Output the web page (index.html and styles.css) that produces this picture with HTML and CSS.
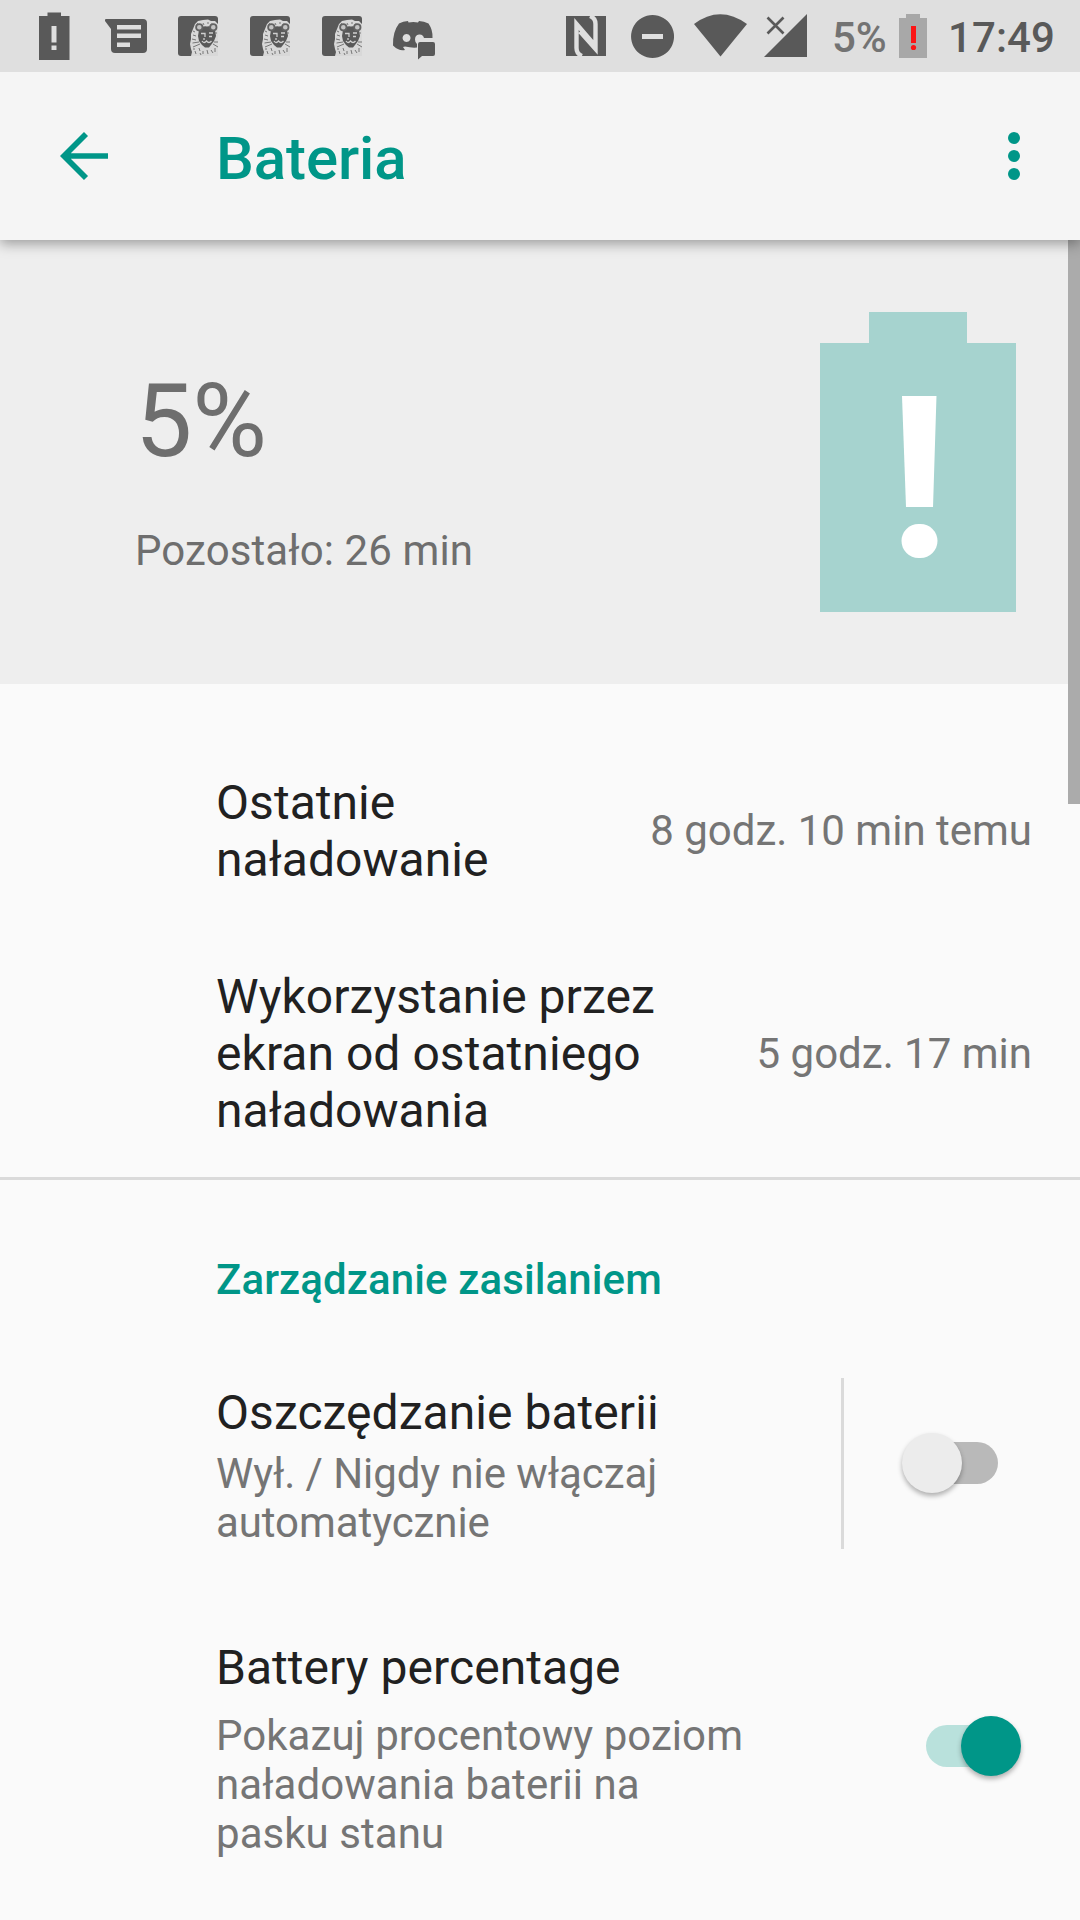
FILE: index.html
```html
<!DOCTYPE html>
<html lang="pl">
<head>
<meta charset="utf-8">
<title>Bateria</title>
<link rel="stylesheet" href="styles.css">
</head>
<body>
<svg class="defs" width="0" height="0">
  <symbol id="lion" viewBox="0 0 40 40">
    <path fill="#595959" d="M3 0H37Q40 0 40 3V40H3Q0 40 0 37V3Q0 0 3 0Z"/>
    <path fill="#d8d8d8" d="M40 8 37 5 33 5 30 3.500 25 4 20 5 17 8 15 13 13 18 13 23 12 28 13 33 14 36 13 40H40Z"/>
    <path fill="#595959" d="M21 14Q24 9.500 29 10.500 34 9.500 37 14L38 20 36 25 33 29 31 31.500H27L24 29 21 25 20 20Z"/>
    <g fill="#c4c4c4" stroke="#636363" stroke-width="1.800">
      <circle cx="21.300" cy="11.300" r="3.200"/><circle cx="35.300" cy="11.300" r="3.200"/>
    </g>
    <path fill="none" stroke="#d0d0d0" stroke-width="1.300" d="M23 17.500h4v3.500M31 17h4M31 20.500h3M24 25q2 3 4.500 0 2.500 3 5 0M26 22v2"/>
    <path fill="none" stroke="#777" stroke-width="1" d="M14.500 27l6.500-1M15 31l7-3M36 26h4M35 28l5 3M15 15l2 1M15 19l3 1M14 23l4 1M17 35l1 3M21 32l1 3M25 35v3M29 34l1 4M33 34l2 3M37 32v4M25 7l1 2M30 6v2M38 16v2M19 7l1 1M34 7v1M22 37l1 2M16 32v2"/>
  </symbol>
</svg>

<header class="status">
  <svg class="status-icons" width="480" height="72" viewBox="0 0 480 72" fill="#595959">
    <path fill-rule="evenodd" d="M47.500 12.500h13.500V16h8.500v44H39V16h8.500ZM51.500 26v16.500h5V26ZM51.500 45.500V50h5v-4.500Z"/>
    <path fill-rule="evenodd" d="M106 19h37q4 0 4 4v26q0 4-4 4h-28q-4 0-4-4V29L105 21Q104.500 19 106 19ZM117 25v4.500h24V25ZM117 33.500V38h24v-4.500ZM117 42.500V47h13v-4.500Z"/>
    <use href="#lion" x="178" y="16" width="40" height="40"/>
    <use href="#lion" x="250" y="16" width="40" height="40"/>
    <use href="#lion" x="322" y="16" width="40" height="40"/>
    <path fill-rule="evenodd" d="M399 23.500q4-2.500 9-2.500l.5 1.500q5-.8 9.500 0L419 21q5 0 9.500 2.500Q433 30 432.500 38H424q-1-4-5-3.500-4 .5-4 5 0 3 2 4.500v3.500q-5.500.5-12-1l-2 .5L405 50q-6 1.500-12-4.500Q392.500 32 399 23.500ZM406.500 34a4 4 0 1 0 .1 0Z"/>
    <path d="M420 42h13q2 0 2 2v10q0 2-2 2h-11l-4 3.500V44q0-2 2-2Z"/>
  </svg>
  <div class="status-right">
    <svg width="250" height="72" viewBox="560 0 250 72" fill="#595959">
      <rect x="566" y="16" width="40" height="40"/>
      <path fill="none" stroke="#dfdfdf" stroke-width="4.400" d="M582 56Q576.500 54 576.500 48V24L595 45.500M590 16Q595.500 18 595.500 24V49L580 31.500"/>
      <path fill-rule="evenodd" d="M652.500 15a21.500 21.500 0 1 0 .1 0ZM642 34h21v5h-21Z"/>
      <path d="M694 24Q720 4.500 747 24L720.500 56.500Z"/>
      <path d="M764 57 807 14V57Z"/>
      <path fill="none" stroke="#595959" stroke-width="2.600" d="m767.500 17.500 16 16m0-16-16 16"/>
    </svg>
    <span class="status-percent">5%</span>
    <svg class="status-battery" width="28" height="44" viewBox="0 0 28 44">
      <path fill="#a8a8a8" d="M7 0h14v4h7v40H0V4h7Z"/>
      <path fill="#fb1414" d="M12 12h5v17h-5Z"/><circle cx="14.500" cy="33.500" r="2.600" fill="#fb1414"/>
    </svg>
    <span class="status-time">17:49</span>
  </div>
</header>

<nav class="toolbar">
  <svg width="48" height="48" viewBox="0 0 48 48"><path fill="none" stroke="#009688" stroke-width="5.700" d="M48 24H4M26 2 4 24l22 22"/></svg>
  <h1 class="title">Bateria</h1>
  <svg class="more" width="12" height="48" viewBox="0 0 12 48" fill="#009688"><circle cx="6" cy="6" r="6"/><circle cx="6" cy="24" r="6"/><circle cx="6" cy="42" r="6"/></svg>
</nav>

<main class="content">
  <section class="summary">
    <div class="summary-text">
      <div class="level">5%</div>
      <div class="remaining">Pozostało: 26 min</div>
    </div>
    <svg width="196" height="300" viewBox="0 0 196 300">
      <path fill="#a6d3cf" d="M49 0h98v31h49v269H0V31h49Z"/>
      <path fill="#fff" d="M82 84h34.500L113 195H86Z"/><rect x="81.500" y="212" width="36" height="34" rx="17" fill="#fff"/>
    </svg>
  </section>

  <section class="stats">
    <div class="stat"><div class="label">Ostatnie<br>naładowanie</div><div class="value">8 godz. 10 min temu</div></div>
    <div class="stat"><div class="label">Wykorzystanie przez<br>ekran od ostatniego<br>naładowania</div><div class="value">5 godz. 17 min</div></div>
  </section>

  <section class="power">
    <h2 class="section-title">Zarządzanie zasilaniem</h2>
    <div class="setting saver">
      <div class="setting-text">
        <div class="label">Oszczędzanie baterii</div>
        <div class="value">Wył. / Nigdy nie włączaj<br>automatycznie</div>
      </div>
      <div class="saver-toggle"><div class="switch"><i class="thumb"></i></div></div>
    </div>
    <div class="setting percentage">
      <div class="setting-text">
        <div class="label">Battery percentage</div>
        <div class="value">Pokazuj procentowy poziom<br>naładowania baterii na<br>pasku stanu</div>
      </div>
      <div class="switch on"><i class="thumb"></i></div>
    </div>
  </section>
  <div class="scrollbar"></div>
</main>
</body>
</html>
```
FILE: styles.css
```css
* { box-sizing: border-box; }
body {
  margin: 0;
  width: 1080px;
  height: 1920px;
  overflow: hidden;
  display: flex;
  flex-direction: column;
  background: #fafafa;
  font-family: Roboto, sans-serif;
  color: #212121;
}
svg { display: block; flex: none; }
.defs { position: absolute; }
h1, h2 { margin: 0; font-weight: 500; color: #009688; }

.status {
  position: relative;
  z-index: 3;
  height: 72px;
  flex: none;
  display: flex;
  justify-content: space-between;
  background: #dfdfdf;
}
.status-right { display: flex; align-items: center; padding-right: 24px; font-weight: 500; white-space: nowrap; }
.status-percent { margin-left: 22px; width: 55px; font-size: 42px; line-height: 72px; padding-top: 4px; color: #737373; }
.status-battery { margin-left: 12px; }
.status-time { margin-left: 21px; width: 108px; font-size: 42px; line-height: 72px; padding-top: 4px; color: #595959; letter-spacing: .1px; }

.toolbar {
  position: relative;
  z-index: 2;
  height: 168px;
  flex: none;
  display: flex;
  align-items: center;
  padding: 0 60px;
  background: #f5f5f5;
  box-shadow: 0 4px 12px rgba(0, 0, 0, .34);
}
.title { margin-left: 108px; padding-top: 5px; font-size: 60px; line-height: 70px; letter-spacing: -.1px; }
.more { margin-left: auto; }

.content { position: relative; flex: 1; }
.summary {
  height: 444px;
  display: flex;
  align-items: center;
  justify-content: space-between;
  padding: 0 64px 0 135px;
  background: #eee;
  color: #6e6e6e;
}
.summary-text { padding-top: 13px; }
.level { font-size: 102px; line-height: 120px; }
.remaining { margin-top: 45px; font-size: 42px; line-height: 50px; letter-spacing: .1px; }

.label { font-size: 48px; line-height: 57px; letter-spacing: .05px; }
.value { font-size: 42px; line-height: 49px; color: #757575; }

.stats { padding: 90px 48px 0 216px; height: 496px; border-bottom: 3px solid #dadada; }
.stat { display: flex; align-items: center; justify-content: space-between; margin-bottom: 80px; white-space: nowrap; }
.stat:first-child .value { padding-bottom: 1px; }

.power { padding-left: 216px; }
.section-title { padding-top: 75px; font-size: 42px; line-height: 49px; letter-spacing: .1px; }
.setting { display: flex; justify-content: space-between; align-items: center; white-space: nowrap; }
.setting-text { padding-top: 4px; }
.saver { margin-top: 74px; height: 171px; padding-right: 82px; }
.saver .value { margin-top: 8px; letter-spacing: -.08px; }
.saver-toggle { height: 171px; border-left: 3px solid #dadada; padding: 0 0 1px 68px; display: flex; align-items: center; }
.percentage { margin-top: 87px; height: 220px; padding-right: 68px; }
.percentage .value { margin-top: 15px; letter-spacing: .05px; }

.switch {
  position: relative;
  width: 86px;
  height: 42px;
  border-radius: 21px;
  background: #b9b9b9;
}
.thumb {
  position: absolute;
  left: -10px;
  top: -9px;
  width: 60px;
  height: 60px;
  border-radius: 50%;
  background: #ececec;
  box-shadow: 0 3px 5px rgba(0, 0, 0, .3);
}
.on { background: #b9e1dc; }
.on .thumb { left: 35px; background: #009688; }

.scrollbar { position: absolute; top: 0; right: 0; width: 12px; height: 564px; background: #ababab; }
```
